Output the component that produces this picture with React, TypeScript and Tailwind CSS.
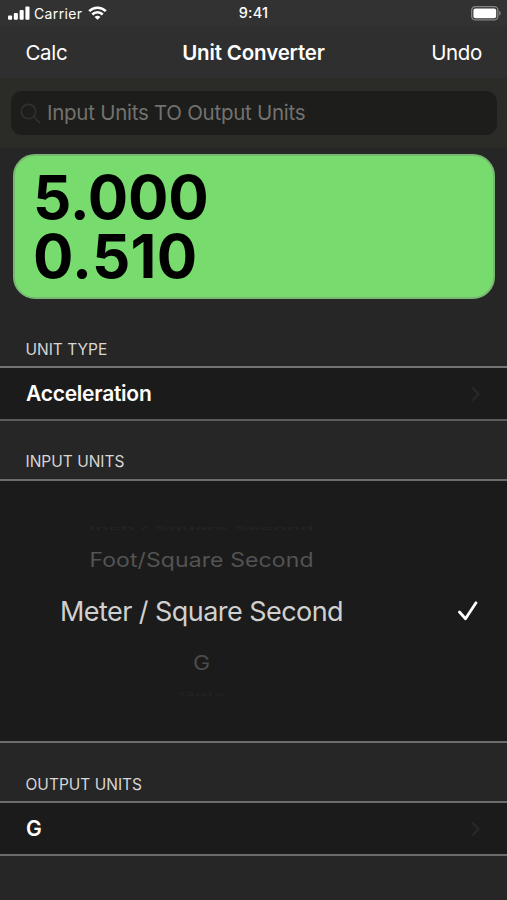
import React from 'react';
import { twMerge } from 'tailwind-merge';

const SignalIcon = () => (
  <svg className="w-[22px] h-[14px]" viewBox="0 0 22 14" fill="white">
    <rect x="0" y="9.5" width="4.1" height="4.2" rx="1" />
    <rect x="5.8" y="7" width="4.1" height="6.7" rx="1" />
    <rect x="11.6" y="4" width="4.1" height="9.7" rx="1" />
    <rect x="17.4" y="0.5" width="4.1" height="13.2" rx="1" />
  </svg>
);

const WifiIcon = () => (
  <svg className="w-[19px] h-[14px]" viewBox="0 0 19 14" fill="none" stroke="white" strokeWidth="2.6">
    <path d="M1.2 5.2a11.7 11.7 0 0 1 16.6 0" />
    <path d="M4.3 8.5a7.3 7.3 0 0 1 10.4 0" />
    <path d="M9.5 13.8 6.6 10.9a4 4 0 0 1 5.8 0z" fill="white" stroke="none" />
  </svg>
);

const BatteryIcon = () => (
  <svg className="w-[30px] h-[15px]" viewBox="0 0 30 15" fill="none">
    <rect x="0.7" y="0.7" width="26.2" height="13.2" rx="3.6" stroke="#858585" strokeWidth="1.3" />
    <rect x="2.4" y="2.4" width="22.8" height="9.8" rx="2" fill="white" />
    <path d="M28.2 5v4.6c1-.3 1.5-1.2 1.5-2.3S29.2 5.3 28.2 5z" fill="#858585" />
  </svg>
);

const Chevron = () => (
  <svg className="w-[9px] h-[16px]" viewBox="0 0 9 16" fill="none" stroke="#282828" strokeWidth="2.2">
    <path d="M1 1.2 7.5 8 1 14.8" />
  </svg>
);

const SectionHeader = ({ title, className }: { title: string; className?: string }) => (
  <div className={twMerge('shrink-0 flex items-end pl-[26px] text-[15.5px] leading-[20px] text-[#d6d6d6]', className)}>
    <span className="-ml-[0.5px]">{title}</span>
  </div>
);

const SelectRow = ({ value, className }: { value: string; className?: string }) => (
  <button className={twMerge('shrink-0 w-full flex items-center justify-between pl-[26px] pr-[27px] bg-[#1b1b1b] text-[21px] font-semibold text-white', className)}>
    <span className="tracking-[-0.25px] pt-[1px]">{value}</span>
    <Chevron />
  </button>
);

const App: React.FC = () => {
  return (
    <div className="w-[507px] h-[900px] overflow-hidden flex flex-col bg-[#262626] text-white font-['Inter','Liberation_Sans',sans-serif]">
      {/* Status Bar */}
      <div className="h-[26px] shrink-0 grid grid-cols-3 items-center px-2 bg-[#323232] text-[14px]">
        <div className="flex items-center">
          <SignalIcon />
          <span className="ml-1 mr-[6px] tracking-[0.35px]">Carrier</span>
          <WifiIcon />
        </div>
        <div className="text-center text-[14.5px] font-medium tracking-[0.2px]">9:41</div>
        <div className="flex justify-end -mr-[2px]"><BatteryIcon /></div>
      </div>

      {/* Nav Bar */}
      <div className="h-[52px] shrink-0 grid grid-cols-3 items-center px-[25px] pt-[2px] bg-[#2f2f2f] text-[20.5px] tracking-[-0.35px]">
        <button className="text-left pl-[0.5px]">Calc</button>
        <h1 className="text-center font-semibold tracking-[-0.15px] whitespace-nowrap">Unit Converter</h1>
        <button className="text-right">Undo</button>
      </div>

      {/* Search */}
      <div className="h-[70px] shrink-0 px-[11px] pt-[13px] bg-[#2b2b28]">
        <div className="h-[44px] w-[486px] rounded-[11px] bg-[#1d1d1b] flex items-center pl-[9px]">
          <svg className="w-[21px] h-[21px]" viewBox="0 0 21 21" fill="none" stroke="#30302e" strokeWidth="1.7">
            <circle cx="8.5" cy="8.5" r="7.2" />
            <path d="m14 14 5.5 5.5" strokeLinecap="round" />
          </svg>
          <span className="ml-[6px] text-[20.5px] tracking-[-0.27px] text-[#72726f]">Input Units TO Output Units</span>
        </div>
      </div>

      {/* Result */}
      <div className="mt-[6px] ml-[13px] w-[482px] h-[145px] shrink-0 rounded-[22px] border-2 border-[#78b771] bg-[#78db6e] pl-[18px] pt-[12px] text-[60px] leading-[58.5px] font-bold text-black">
        <div className="tracking-[-0.2px]">5.000</div>
        <div className="tracking-[0.3px]">0.510</div>
      </div>

      <SectionHeader title="UNIT TYPE" className="h-[67px] pb-[6px]" />
      <SelectRow value="Acceleration" className="h-[55px] border-t-2 border-t-[#747474] border-b-2 border-b-[#5c5c5c]" />

      <SectionHeader title="INPUT UNITS" className="h-[58px] pb-[7px]" />
      {/* Wheel picker */}
      <div className="h-[264px] shrink-0 bg-[#1b1b1b] border-y-2 border-[#6c6c6c] flex items-center">
        <div className="w-[403px] flex flex-col items-center whitespace-nowrap">
          <div className="h-[16px] flex items-center text-[22px] text-[#252525]"><span className="scale-y-[0.22]">Inch / Square Second</span></div>
          <div className="h-[48px] flex items-center text-[23px] tracking-[0.1px] text-[#535353]"><span className="scale-y-[0.85]">Foot/Square Second</span></div>
          <div className="h-[56px] flex items-center text-[27px] tracking-[-0.55px] text-[#d0d0d0]">Meter / Square Second</div>
          <div className="h-[46px] flex items-center text-[23px] text-[#4b4b4b]"><span className="scale-y-[0.85]">G</span></div>
          <div className="h-[16px] flex items-center text-[22px] text-[#232323]"><span className="scale-y-[0.22]">Gals</span></div>
        </div>
        <svg className="ml-[55px] w-[20px] h-[20px]" viewBox="0 0 20 20" fill="none" stroke="white" strokeWidth="2.8" strokeLinecap="round" strokeLinejoin="round">
          <path d="M1.5 11 7.5 17.8 18 1.8" />
        </svg>
      </div>

      <SectionHeader title="OUTPUT UNITS" className="h-[58px] pb-[6px]" />
      <SelectRow value="G" className="h-[55px] border-y-2 border-[#6c6c6c]" />
    </div>
  );
};

export default App;
